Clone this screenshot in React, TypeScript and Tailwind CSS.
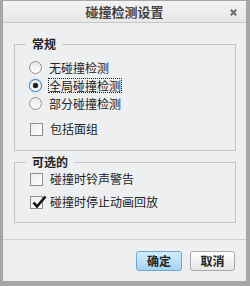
import React from 'react';

const font = { fontFamily: '"Noto Sans CJK SC", "Noto Sans", sans-serif' };

function Radio({ checked }: { checked?: boolean }) {
  return (
    <span
      className={`relative flex h-[13px] w-[13px] shrink-0 items-center justify-center rounded-full border bg-gradient-to-b from-[#e8e8e8] to-[#ffffff] ${
        checked ? 'border-[#3d7bad] shadow-[0_0_2px_#7fb6e6]' : 'border-[#8f8f8f]'
      }`}
    >
      {checked && <span className="h-[5px] w-[5px] rounded-full bg-[#1e1e1e] shadow-[0_0_1px_#444]" />}
    </span>
  );
}

function Checkbox({ checked }: { checked?: boolean }) {
  return (
    <span className="relative h-[13px] w-[13px] shrink-0 border border-[#8f8f8f] bg-gradient-to-br from-[#ececec] to-[#ffffff]">
      {checked && (
        <svg className="absolute left-[1px] top-[-2px]" width="15" height="14" viewBox="0 0 15 14">
          <path d="M1.5 7.5 L5 11.5 L13.5 1.5" fill="none" stroke="#111" strokeWidth="2.6" strokeLinejoin="miter" />
        </svg>
      )}
    </span>
  );
}

export default function App() {
  return (
    <div
      className="h-[286px] w-[250px] bg-[#a6a6a6] pb-[5px] pl-[3px] pr-[4px] pt-px text-[12px] text-[#222]"
      style={font}
    >
      <div className="flex h-full flex-col bg-[#eeeff1]">
        {/* title bar */}
        <div className="relative flex h-[22px] shrink-0 items-center justify-center border-b border-[#c6c6c6] bg-gradient-to-b from-[#f3f3f3] to-[#e7e7e7]">
          <span className="text-[13px] font-bold leading-none text-[#444]">碰撞检测设置</span>
          <svg className="absolute right-[9px] top-[8px]" width="7" height="7" viewBox="0 0 7 7">
            <path d="M0.8 0.8 L6.2 6.2 M6.2 0.8 L0.8 6.2" stroke="#6a6a6a" strokeWidth="2" />
          </svg>
        </div>

        {/* 常规 */}
        <fieldset className="ml-[11px] mr-[10px] mt-[13px] border border-[#c4c4c4] p-0">
          <legend className="ml-[11px] px-[6px] text-[12px] font-bold leading-[16px]">常规</legend>
          <div className="flex flex-col pb-[12px] pl-[14px] pt-[6px]">
            <label className="flex h-[18px] items-center gap-[6px]">
              <Radio />
              <span className="px-px leading-[15px]">无碰撞检测</span>
            </label>
            <label className="flex h-[18px] items-center gap-[6px]">
              <Radio checked />
              <span className="border border-dotted border-[#222] leading-[13px]">全局碰撞检测</span>
            </label>
            <label className="flex h-[18px] items-center gap-[6px]">
              <Radio />
              <span className="px-px leading-[15px]">部分碰撞检测</span>
            </label>
            <label className="mt-[8px] flex h-[18px] items-center gap-[6px] pl-px">
              <Checkbox />
              <span className="px-px">包括面组</span>
            </label>
          </div>
        </fieldset>

        {/* 可选的 */}
        <fieldset className="ml-[11px] mr-[10px] mt-[3px] border border-[#c4c4c4] p-0">
          <legend className="ml-[11px] px-[6px] text-[12px] font-bold leading-[16px]">可选的</legend>
          <div className="flex flex-col gap-[5px] pb-[11px] pl-[15px]">
            <label className="flex h-[18px] items-center gap-[6px]">
              <Checkbox />
              <span className="px-px">碰撞时铃声警告</span>
            </label>
            <label className="flex h-[18px] items-center gap-[6px]">
              <Checkbox checked />
              <span className="px-px">碰撞时停止动画回放</span>
            </label>
          </div>
        </fieldset>

        <div className="mt-[16px] h-px shrink-0 bg-[#cfcfcf]" />

        <div className="flex justify-end gap-[8px] pr-[11px] pt-[11px]">
          <button className="h-[20px] w-[46px] rounded-[3px] border border-[#6ea6d2] bg-gradient-to-b from-[#d3ecfb] to-[#a5d3f1] text-[12px] font-bold leading-none text-[#222]">
            确定
          </button>
          <button className="h-[20px] w-[45px] rounded-[3px] border border-[#a9a9a9] bg-gradient-to-b from-[#ffffff] to-[#e6e6e6] text-[12px] font-bold leading-none text-[#222]">
            取消
          </button>
        </div>
      </div>
    </div>
  );
}
